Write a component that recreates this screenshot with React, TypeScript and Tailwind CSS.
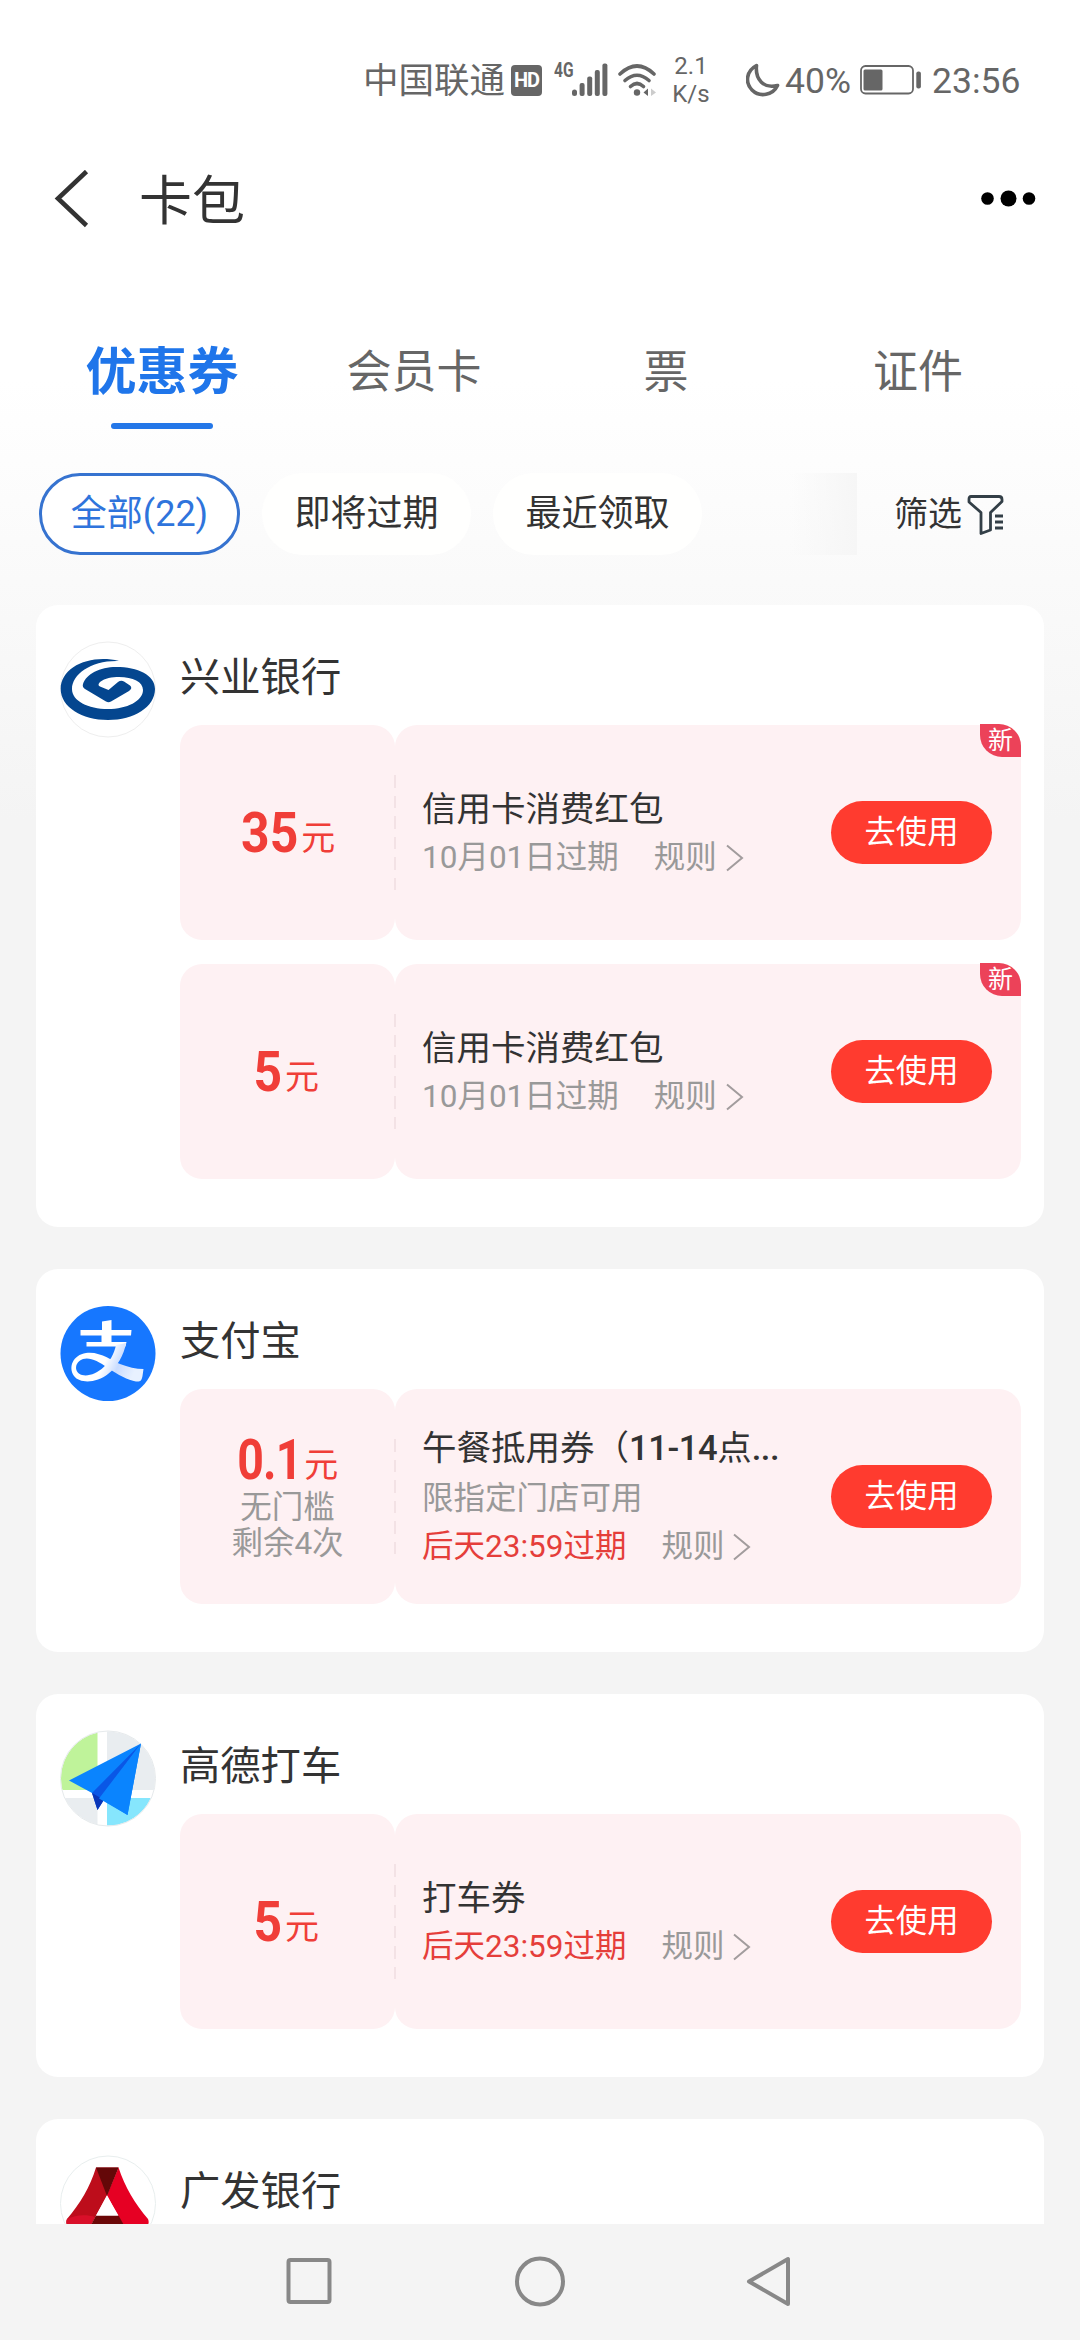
import React from 'react';
import clsx from 'clsx';

type Coupon = {
  id: number;
  amount: string;
  notes?: string[];
  title: string;
  limit?: string;
  expire: string;
  urgent?: boolean;
  isNew?: boolean;
};

type Merchant = {
  name: string;
  logo: React.ReactNode;
  coupons: Coupon[];
};

function IndustrialBankLogo() {
  return (
    <svg viewBox="0 0 96 97" className="w-[96px] h-[97px]">
      <circle cx="48" cy="48.5" r="47.5" fill="#fff" stroke="#eeeeee" />
      <path
        d="M59 20 C30 13 0.7 26 0.7 48 C0.7 66 22 79 48 79 C74 79 95 66 95 48 C95 34 78 26 56 26 C40 26 26 33 23 43 Q22 46 25 48 L46 60.5 Q48.5 62 51 60.5 L69 50 Q73 47 70 44.5 L64 40.5 Q61 39 58 41 L48.5 49 L40 45.5 Q37 44 40 41 C45 37 52 36 59 36 C73 36 83 41 83 49 C83 60 67 68 48 68 C28 68 12 60 12 48 C12 33 32 19 59 20Z"
        fill="#04468f"
      />
    </svg>
  );
}

function AlipayLogo() {
  return (
    <svg viewBox="0 0 96 97" className="w-[96px] h-[97px]">
      <defs>
        <linearGradient id="alipayTail" x1="0" y1="0" x2="1" y2="0.25">
          <stop offset="0.55" stopColor="#fff" />
          <stop offset="0.75" stopColor="#c9dcff" />
          <stop offset="1" stopColor="#e8f1ff" />
        </linearGradient>
      </defs>
      <circle cx="48" cy="48.5" r="47.5" fill="#1677ff" />
      <path d="M42 16.5 L51.5 15 V25 H71.5 L71 30.5 H51.5 V37 H66.5 L65.5 41.5 H26.5 V37 H41.5 V30.5 H20.5 V25 H42Z" fill="#fff" />
      <path
        d="M66 38 C64 50 57 62 48 69 C37 78 20 79 14 71 C8 62 13 50 26 48 C40 46 52 56 60 59 C68 62 76 64 83.5 64 L82.5 71 C81.5 76 80 77 76 76.5 C68 75 58 70 48 63 C38 56 30 52 23 54 C14 57 14 68 22 70 C34 73 52 60 56 40Z"
        fill="url(#alipayTail)"
      />
    </svg>
  );
}

function AmapLogo() {
  return (
    <svg viewBox="0 0 96 97" className="w-[96px] h-[97px]">
      <clipPath id="amapClip">
        <circle cx="48" cy="48.5" r="47" />
      </clipPath>
      <g clipPath="url(#amapClip)">
        <rect width="96" height="97" fill="#fff" />
        <path d="M0 0H37.5V60H0Z" fill="#bff39a" />
        <path d="M47 0H96V60H47Z" fill="#e9edf0" />
        <path d="M0 68H37.5V97H0Z" fill="#e9edf0" />
        <path d="M47 68H96V97H47Z" fill="#86e6fd" />
      </g>
      <circle cx="48" cy="48.5" r="47.5" fill="none" stroke="#e6eaec" />
      <path d="M81 13.5 L9 50.5 L32 63 L67.5 85Z" fill="#0a84fe" />
      <path d="M81 13.5 L32 63 L37.5 80 L43.5 70.5 L41 68Z" fill="#0a57e6" />
      <path d="M32 63 L37.5 80 L43.5 70.5 L39 67Z" fill="#0a36b8" />
      <path d="M81 13.5 L39 68.5 L67.5 85Z" fill="#0a84fe" />
    </svg>
  );
}

function GuangfaLogo() {
  return (
    <svg viewBox="0 0 96 97" className="w-[96px] h-[97px]">
      <circle cx="48" cy="48.5" r="47.5" fill="#fff" stroke="#e8eeee" />
      <path d="M36 12.5 H58.5 L47 40 L30 72 H9 Q5 69 7 64 C20 49 30 32 36 12.5Z" fill="#bd0d1b" />
      <path d="M58.5 12.5 L47 40 L64 72 H86 Q90 69 88 64 C75 49 65 32 58.5 12.5Z" fill="#e60023" />
      <path d="M36 12.5 H58.5 L47 41Z" fill="#640808" />
      <path d="M7 64 C15 60 26 59 35 62 L30 72 H9 Q5 69 7 64Z" fill="#d90f29" />
      <path d="M36 60.5 H58.5 L65 72 H30Z" fill="#6b0707" />
      <path d="M47 41 L36 60.5 H58.5Z" fill="#fff" />
    </svg>
  );
}

const tabs = ['优惠券', '会员卡', '票', '证件'];

const merchants: Merchant[] = [
  {
    name: '兴业银行',
    logo: <IndustrialBankLogo />,
    coupons: [
      { id: 1, amount: '35', title: '信用卡消费红包', expire: '10月01日过期', isNew: true },
      { id: 2, amount: '5', title: '信用卡消费红包', expire: '10月01日过期', isNew: true },
    ],
  },
  {
    name: '支付宝',
    logo: <AlipayLogo />,
    coupons: [
      {
        id: 3,
        amount: '0.1',
        notes: ['无门槛', '剩余4次'],
        title: '午餐抵用券（11-14点...',
        limit: '限指定门店可用',
        expire: '后天23:59过期',
        urgent: true,
      },
    ],
  },
  {
    name: '高德打车',
    logo: <AmapLogo />,
    coupons: [{ id: 4, amount: '5', title: '打车券', expire: '后天23:59过期', urgent: true }],
  },
  { name: '广发银行', logo: <GuangfaLogo />, coupons: [] },
];

function StatusBar() {
  return (
    <div className="flex h-[160px] shrink-0 items-center pl-[363px] text-[#666666]">
      <span className="w-[148px] pt-[2px] text-[35.5px] leading-[40px]">中国联通</span>
      <span className="flex h-[31px] w-[31px] items-center justify-center rounded-[4px] bg-[#666666] text-[20px] font-bold leading-none tracking-[-1px] text-white">
        HD
      </span>
      <span className="ml-[12px] mb-[20px] w-[18px] origin-left scale-x-[0.74] text-[21px] font-bold leading-none">4G</span>
      <svg viewBox="0 0 36 34" className="h-[34px] w-[36px]" fill="#666666">
        <rect x="0" y="26.5" width="5" height="6.5" rx="2.5" />
        <rect x="7.6" y="20" width="5" height="13" rx="2" />
        <rect x="15.2" y="13.5" width="5" height="19.5" rx="2" />
        <rect x="22.8" y="7" width="5" height="26" rx="2" />
        <rect x="30.4" y="0.5" width="5" height="32.5" rx="2" />
      </svg>
      <svg viewBox="0 0 40 34" className="ml-[9px] h-[34px] w-[40px]" fill="none" stroke="#666666" strokeWidth="3.6" strokeLinecap="round">
        <path d="M3 11 Q20 -5 37 11" />
        <path d="M8 17.5 Q20 7 32 17.5" />
        <path d="M13.5 23.5 Q20 17.5 26.5 23.5" />
        <circle cx="20" cy="29.5" r="3.2" fill="#666666" stroke="none" />
        <path d="M31 25.5 V33 L26.5 29.5Z" fill="#666666" stroke="none" />
        <path d="M34 25.5 V33 L39 29.5Z" fill="#cccccc" stroke="none" />
      </svg>
      <div className="ml-[14px] w-[40px] text-center text-[24px] leading-[28px]">
        <div>2.1</div>
        <div>K/s</div>
      </div>
      <svg viewBox="0 0 34 34" className="ml-[35px] h-[34px] w-[34px]" fill="none" stroke="#666666" strokeWidth="3.6" strokeLinejoin="round">
        <path d="M10.5 2.5 C0 8 -1 20 6 27 C14 35 27 32 31.5 22.5 C18 26 9 17 10.5 2.5Z" />
      </svg>
      <span className="ml-[5px] w-[75px] pt-[2px] text-[35.5px] leading-[40px]">40%</span>
      <svg viewBox="0 0 62 30" className="h-[30px] w-[62px]">
        <rect x="1" y="1" width="52" height="27.5" rx="4.5" fill="none" stroke="#666666" strokeWidth="1.8" />
        <rect x="3.5" y="4.5" width="19" height="21" rx="1.5" fill="#666666" />
        <rect x="56.3" y="6.5" width="4.6" height="17" rx="2" fill="#666666" />
      </svg>
      <span className="ml-[10px] pt-[2px] text-[35.5px] leading-[40px]">23:56</span>
    </div>
  );
}

function Header() {
  return (
    <div className="flex h-[78px] shrink-0 items-center pl-[54px] pr-[44px]">
      <svg viewBox="0 0 36 58" className="h-[58px] w-[36px]" fill="none" stroke="#333333" strokeWidth="4.6">
        <path d="M32.5 1.5 L4 28.5 L32.5 55.5" />
      </svg>
      <h1 className="ml-[49px] flex-1 pt-[5px] text-[53px] leading-[60px] text-[#333333]">卡包</h1>
      <svg viewBox="0 0 56 18" className="h-[18px] w-[56px]">
        <circle cx="7.5" cy="8.5" r="6.3" />
        <circle cx="28.5" cy="8.5" r="8" />
        <circle cx="49" cy="8.5" r="6.3" />
      </svg>
    </div>
  );
}

function Tabs() {
  return (
    <div className="mx-[36px] mt-[105px] grid h-[130px] shrink-0 grid-cols-4">
      {tabs.map((tab, i) => (
        <div key={tab} className="flex flex-col items-center">
          <span
            className={clsx(
              'leading-[60px]',
              i === 0 ? 'text-[51px] font-bold text-[#1f75ea]' : 'text-[45px] text-[#666666]'
            )}
          >
            {tab}
          </span>
          {i === 0 && <span className="mt-[20px] h-[6px] w-[102px] rounded-full bg-[#2477e8]" />}
        </div>
      ))}
    </div>
  );
}

function Filters() {
  return (
    <div className="flex h-[82px] shrink-0 items-center text-[36px] text-[#333333]">
      <button className="ml-[39px] h-[82px] w-[201px] rounded-full border-[3px] border-[#3673d0] bg-white text-[#2f74dc]">
        全部(22)
      </button>
      <button className="ml-[22px] h-[82px] w-[209px] rounded-full bg-[#fffffe]">即将过期</button>
      <button className="ml-[22px] h-[82px] w-[209px] rounded-full bg-[#fffffe]">最近领取</button>
      <div className="ml-[88px] h-[82px] w-[67px] bg-gradient-to-r from-transparent to-[#f6f6f6]" />
      <button className="ml-[37px] flex items-center text-[34px]">
        筛选
        <svg viewBox="0 0 38 42" className="ml-[5px] mt-[2px] h-[42px] w-[38px]" fill="none" stroke="#333f47" strokeWidth="2.8" strokeLinejoin="round">
          <path d="M4 2.5 H32 Q35 2.5 35 5.5 V7.5 L23.5 18.5 V36 L14 39.5 V18.5 L2 8 V5 Q2 2.5 4 2.5Z" />
          <path d="M28 22 H36 M28 28 H36 M28 34 H36" />
        </svg>
      </button>
    </div>
  );
}

// digits and ellipsis come out heavier than the Chinese characters
function CouponTitle({ text }: { text: string }) {
  return (
    <div className="pb-[2px] text-[34.5px] leading-[48px] text-[#333333]">
      {text.split(/([\d.-]+)/).map((part, i) => (
        <span key={i} className={clsx(i % 2 === 1 && 'font-medium tracking-[-0.4px]')}>
          {part}
        </span>
      ))}
    </div>
  );
}

function CouponCard({ coupon }: { coupon: Coupon }) {
  return (
    <div className="relative flex h-[215px]">
      <div className={clsx('flex w-[215px] flex-col items-center justify-center rounded-[22px] bg-[#fef1f3]', coupon.notes && 'pb-[4px]')}>
        <div className={clsx('flex items-baseline text-[#f03e38]', coupon.notes ? 'h-[62px]' : 'h-[64px]')}>
          <span
            className={clsx(
              'origin-right text-[56px] font-bold leading-[64px]',
              coupon.notes ? '-ml-[13px] scale-x-[0.83] tracking-[-1px]' : '-ml-[6px] scale-x-[0.89]'
            )}
          >
            {coupon.amount}
          </span>
          <span className="ml-[3px] -translate-y-[2px] text-[34px] leading-[40px]">元</span>
        </div>
        {coupon.notes?.map((note) => (
          <span key={note} className="text-[31.5px] leading-[36px] text-[#999999]">
            {note}
          </span>
        ))}
      </div>
      <div className="flex flex-1 items-center justify-between rounded-[22px] bg-[#fef1f3] pl-[27px] pr-[29px]">
        <div className="whitespace-nowrap">
          <CouponTitle text={coupon.title} />
          {coupon.limit && <div className="text-[31.5px] leading-[50px] text-[#999999]">{coupon.limit}</div>}
          <div className="flex items-center text-[31.5px] leading-[46px] text-[#999999]">
            <span className={clsx(coupon.urgent && 'text-[#e53e3a]')}>{coupon.expire}</span>
            <span className="ml-[35px]">规则</span>
            <svg viewBox="0 0 18 28" className="ml-[9px] h-[28px] w-[18px]" fill="none" stroke="#a29c9d" strokeWidth="2">
              <path d="M1 1.5 L16 14 L1 26.5" />
            </svg>
          </div>
        </div>
        <button className="h-[63px] w-[161px] rounded-full bg-[#ff3b2f] pt-[1px] text-[31.3px] leading-none text-white">去使用</button>
      </div>
      <div className="absolute left-[214px] top-[50px] flex flex-col gap-[8px]">
        {[0, 1, 2, 3, 4, 5].map((n) => (
          <span key={n} className="h-[12.5px] w-[2px] bg-[#f3e2e5]" />
        ))}
      </div>
      {coupon.isNew && (
        <span className="absolute right-0 top-[-1px] flex h-[33px] w-[41px] items-center justify-center rounded-bl-[22px] rounded-tr-[22px] bg-[#ec4259] pb-[1px] text-[25px] leading-none text-white">
          新
        </span>
      )}
    </div>
  );
}

function MerchantCard({ merchant }: { merchant: Merchant }) {
  return (
    <div className="flex min-h-[383px] rounded-[22px] bg-white pb-[48px] pl-[24px] pr-[23px]">
      <div className="mt-[36px] w-[96px] shrink-0">{merchant.logo}</div>
      <div className="ml-[24px] flex-1">
        <h2 className="h-[120px] pt-[48px] text-[40.3px] leading-[50px] text-[#333333]">{merchant.name}</h2>
        <div className="flex flex-col gap-[24px]">
          {merchant.coupons.map((coupon) => (
            <CouponCard key={coupon.id} coupon={coupon} />
          ))}
        </div>
      </div>
    </div>
  );
}

function NavBar() {
  return (
    <div className="flex h-[116px] shrink-0 items-center bg-[#f4f4f4] pl-[284px]">
      <svg viewBox="0 0 50 54" className="h-[54px] w-[50px]" fill="none" stroke="#888888" strokeWidth="4">
        <rect x="4.5" y="5" width="41" height="42" rx="2" />
      </svg>
      <svg viewBox="0 0 54 54" className="ml-[179px] h-[54px] w-[54px]" fill="none" stroke="#888888" strokeWidth="4">
        <circle cx="27" cy="26.5" r="23" />
      </svg>
      <svg viewBox="0 0 50 54" className="ml-[178px] h-[54px] w-[50px]" fill="none" stroke="#888888" strokeWidth="4" strokeLinejoin="round">
        <path d="M43 4 V49 L4 26.5Z" />
      </svg>
    </div>
  );
}

export default function App() {
  return (
    <div className="flex h-[2340px] w-[1080px] flex-col overflow-hidden bg-[linear-gradient(to_bottom,#ffffff_380px,#f4f4f4_820px)] font-[Roboto,'Noto_Sans_CJK_SC',sans-serif]">
      <StatusBar />
      <Header />
      <Tabs />
      <Filters />
      <div className="mt-[50px] flex min-h-0 flex-1 flex-col gap-[42px] overflow-hidden px-[36px]">
        {merchants.map((merchant) => (
          <div key={merchant.name} className="shrink-0">
            <MerchantCard merchant={merchant} />
          </div>
        ))}
      </div>
      <NavBar />
    </div>
  );
}
